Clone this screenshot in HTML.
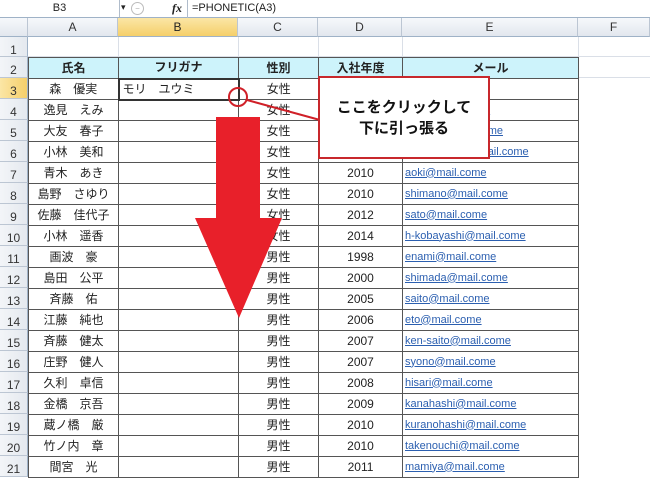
<!DOCTYPE html>
<html><head><meta charset="utf-8"><style>
*{margin:0;padding:0;box-sizing:border-box}
body{width:650px;height:477px;overflow:hidden;background:#fff;position:relative;font-family:"Liberation Sans","Noto Sans CJK JP",sans-serif;font-size:12px;color:#222}
.fb{position:absolute;left:0;top:0;width:650px;height:18px;background:#fff;border-bottom:1px solid #9fb2c7}
.nb{position:absolute;left:0;top:0;width:120px;height:17px;border-right:1px solid #b0bccb;text-align:center;font-size:11px;line-height:17px;background:#fff}
.ch{position:absolute;top:18px;height:19px;background:linear-gradient(#f6f8fb,#e2e7ee);border-right:1px solid #bcc6d3;border-bottom:1px solid #9fb2c7;text-align:center;line-height:19px;color:#333;font-size:12px}
.rh{position:absolute;left:0;width:28px;height:21px;background:linear-gradient(90deg,#f3f5f8,#e4e9ef);border-bottom:1px solid #bcc6d3;border-right:1px solid #9fb2c7;text-align:center;padding-top:6px;font-size:12px;color:#333;line-height:15px}
.g{position:absolute;background:#dadfe7}
table{position:absolute;left:28px;top:57px;border-collapse:collapse;table-layout:fixed}
td{height:21px;border:1px solid #555;text-align:center;font-size:12px;padding:0;white-space:nowrap;overflow:hidden;line-height:19px}
tr.h td{background:#cdf3fb;font-weight:bold}
td.m{text-align:left;padding-left:2px;color:#2b5fb0;text-decoration:underline;font-size:11px}
</style></head><body>
<div class="fb"><div class="nb">B3</div>
<span style="position:absolute;left:121px;top:2px;font-size:9px">▾</span>
<span style="position:absolute;left:131px;top:2px;width:13px;height:13px;border:1px solid #bbb;border-radius:7px;font-size:8px;color:#aaa;text-align:center;line-height:11px">&#8722;</span>
<span style="position:absolute;left:172px;top:1px;font-style:italic;font-family:'Liberation Serif',serif;font-size:12px;font-weight:bold">fx</span>
<div style="position:absolute;left:187px;top:0;height:18px;border-left:1px solid #b0bccb"></div>
<span style="position:absolute;left:192px;top:2px;font-size:11px">=PHONETIC(A3)</span></div>
<div class="ch" style="left:0;width:28px"></div>
<div class="ch" style="left:28px;width:90px">A</div>
<div class="ch" style="left:118px;width:120px;background:linear-gradient(#fbe6a6,#f5cf6a);color:#222">B</div>
<div class="ch" style="left:238px;width:80px">C</div>
<div class="ch" style="left:318px;width:84px">D</div>
<div class="ch" style="left:402px;width:176px">E</div>
<div class="ch" style="left:578px;width:72px">F</div>
<div class="g" style="left:28px;top:56px;width:622px;height:1px"></div>
<div class="g" style="left:118px;top:37px;width:1px;height:20px"></div>
<div class="g" style="left:238px;top:37px;width:1px;height:20px"></div>
<div class="g" style="left:318px;top:37px;width:1px;height:20px"></div>
<div class="g" style="left:402px;top:37px;width:1px;height:20px"></div>
<div class="g" style="left:578px;top:37px;width:1px;height:440px"></div>
<div id="rows"></div>
<div class="rh" style="top:37px;height:20px">1</div>
<div class="rh" style="top:57px">2</div>
<div class="rh" style="top:78px;background:linear-gradient(90deg,#fbe6a6,#f5cf6a)">3</div>
<div class="rh" style="top:99px">4</div><div class="rh" style="top:120px">5</div><div class="rh" style="top:141px">6</div><div class="rh" style="top:162px">7</div><div class="rh" style="top:183px">8</div><div class="rh" style="top:204px">9</div><div class="rh" style="top:225px">10</div><div class="rh" style="top:246px">11</div><div class="rh" style="top:267px">12</div><div class="rh" style="top:288px">13</div><div class="rh" style="top:309px">14</div><div class="rh" style="top:330px">15</div><div class="rh" style="top:351px">16</div><div class="rh" style="top:372px">17</div><div class="rh" style="top:393px">18</div><div class="rh" style="top:414px">19</div><div class="rh" style="top:435px">20</div><div class="rh" style="top:456px">21</div>
<div class="g" style="left:578px;top:77px;width:72px;height:1px"></div>
<table>
<colgroup><col style="width:90px"><col style="width:120px"><col style="width:80px"><col style="width:84px"><col style="width:176px"></colgroup>
<tr class="h"><td>氏名</td><td>フリガナ</td><td>性別</td><td>入社年度</td><td>メール</td></tr>
<tr><td>森　優実</td><td style="text-align:left;padding-left:3px;border:2px solid #333">モリ　ユウミ</td><td>女性</td><td>2009</td><td class="m">mori@mail.come</td></tr>
<tr><td>逸見　えみ</td><td></td><td>女性</td><td>2009</td><td class="m">hemi@mail.come</td></tr>
<tr><td>大友　春子</td><td></td><td>女性</td><td>2010</td><td class="m">ohtomo@mail.come</td></tr>
<tr><td>小林　美和</td><td></td><td>女性</td><td>2010</td><td class="m">m-kobayashi@mail.come</td></tr>
<tr><td>青木　あき</td><td></td><td>女性</td><td>2010</td><td class="m">aoki@mail.come</td></tr>
<tr><td>島野　さゆり</td><td></td><td>女性</td><td>2010</td><td class="m">shimano@mail.come</td></tr>
<tr><td>佐藤　佳代子</td><td></td><td>女性</td><td>2012</td><td class="m">sato@mail.come</td></tr>
<tr><td>小林　遥香</td><td></td><td>女性</td><td>2014</td><td class="m">h-kobayashi@mail.come</td></tr>
<tr><td>画波　豪</td><td></td><td>男性</td><td>1998</td><td class="m">enami@mail.come</td></tr>
<tr><td>島田　公平</td><td></td><td>男性</td><td>2000</td><td class="m">shimada@mail.come</td></tr>
<tr><td>斉藤　佑</td><td></td><td>男性</td><td>2005</td><td class="m">saito@mail.come</td></tr>
<tr><td>江藤　純也</td><td></td><td>男性</td><td>2006</td><td class="m">eto@mail.come</td></tr>
<tr><td>斉藤　健太</td><td></td><td>男性</td><td>2007</td><td class="m">ken-saito@mail.come</td></tr>
<tr><td>庄野　健人</td><td></td><td>男性</td><td>2007</td><td class="m">syono@mail.come</td></tr>
<tr><td>久利　卓信</td><td></td><td>男性</td><td>2008</td><td class="m">hisari@mail.come</td></tr>
<tr><td>金橋　京吾</td><td></td><td>男性</td><td>2009</td><td class="m">kanahashi@mail.come</td></tr>
<tr><td>蔵ノ橋　厳</td><td></td><td>男性</td><td>2010</td><td class="m">kuranohashi@mail.come</td></tr>
<tr><td>竹ノ内　章</td><td></td><td>男性</td><td>2010</td><td class="m">takenouchi@mail.come</td></tr>
<tr><td>間宮　光</td><td></td><td>男性</td><td>2011</td><td class="m">mamiya@mail.come</td></tr>
</table>
<svg style="position:absolute;left:0;top:0" width="650" height="477">
<polygon points="216,117 260,117 260,218 282,218 239,318 195,218 216,218" fill="#e8202a"/>
<line x1="247" y1="100" x2="320" y2="120" stroke="#d02028" stroke-width="2"/>
<circle cx="238" cy="97" r="9" fill="none" stroke="#d02028" stroke-width="2"/>
<rect x="319" y="77" width="170" height="81" fill="#fff" stroke="#c8282c" stroke-width="2"/>
<text x="404" y="112" text-anchor="middle" font-family="Liberation Sans,Noto Sans CJK JP,sans-serif" font-size="15" font-weight="bold" fill="#111">ここをクリックして</text>
<text x="404" y="133" text-anchor="middle" font-family="Liberation Sans,Noto Sans CJK JP,sans-serif" font-size="15" font-weight="bold" fill="#111">下に引っ張る</text>
</svg>
</body></html>
